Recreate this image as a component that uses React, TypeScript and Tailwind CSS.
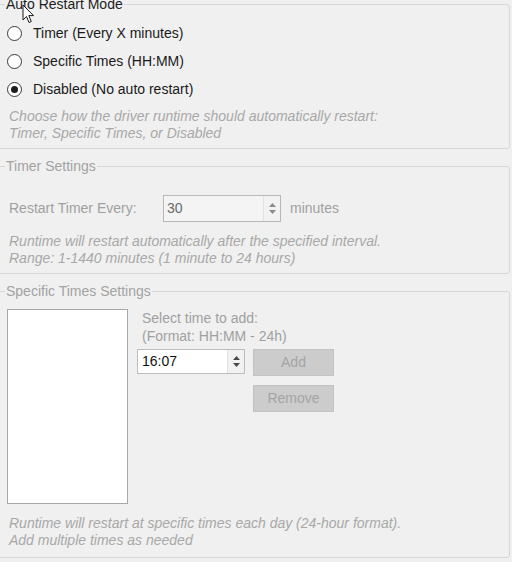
import React from "react";

function Radio({ label, checked }: { label: string; checked?: boolean }) {
  return (
    <div className="flex h-[28px] items-center">
      <div className="flex h-[15px] w-[15px] items-center justify-center rounded-full border border-[#3a3a3a] bg-white">
        {checked && <div className="h-[7px] w-[7px] rounded-full bg-[#1c1c1c]" />}
      </div>
      <span className="ml-[11px] text-[#1a1a1a]">{label}</span>
    </div>
  );
}

function Spinner({ disabled }: { disabled?: boolean }) {
  const c = disabled ? "#8a8a8a" : "#4a4a4a";
  return (
    <div className="flex h-full w-[17px] flex-col items-center justify-center gap-[3px] border-l border-[#e2e2e2] bg-[#f2f2f2]">
      <svg width="7" height="4" viewBox="0 0 7 4">
        <path d="M0 4 L3.5 0 L7 4 Z" fill={c} />
      </svg>
      <svg width="7" height="4" viewBox="0 0 7 4">
        <path d="M0 0 L3.5 4 L7 0 Z" fill={c} />
      </svg>
    </div>
  );
}

export default function App() {
  return (
    <div className="relative h-[562px] w-[512px] overflow-hidden bg-[#f0f0f0] font-['Liberation_Sans',Arial,sans-serif] text-[14px]">
      <div className="-ml-[3px] -mt-[4px] flex w-[513px] flex-col gap-[9px]">
        {/* Auto Restart Mode */}
        <fieldset className="h-[153px] rounded-[3px] border border-[#d6d6d6]">
          <legend className="ml-[7px] px-[1px] leading-[16px] text-[#1e1e1e]">Auto Restart Mode</legend>
          <div className="pl-[9px] pt-[7px]">
            <Radio label="Timer (Every X minutes)" />
            <Radio label="Specific Times (HH:MM)" />
            <Radio label="Disabled (No auto restart)" checked />
          </div>
          <div className="mt-[5px] pl-[11px] italic leading-[17px] text-[#a8a8a8]">
            <div>Choose how the driver runtime should automatically restart:</div>
            <div>Timer, Specific Times, or Disabled</div>
          </div>
        </fieldset>

        {/* Timer Settings */}
        <fieldset className="h-[116px] rounded-[3px] border border-[#d6d6d6]">
          <legend className="ml-[7px] px-[1px] leading-[16px] text-[#a2a2a2]">Timer Settings</legend>
          <div className="mt-[21px] flex h-[27px] items-center">
            <div className="w-[165px] pl-[11px] text-[#a0a0a0]">Restart Timer Every:</div>
            <div className="flex h-[27px] w-[118px] items-stretch border border-[#b8b8b8] bg-[#f4f4f4]">
              <div className="flex flex-1 items-center pl-[3px] text-[#6a6a6a]">30</div>
              <Spinner disabled />
            </div>
            <div className="ml-[9px] text-[#a0a0a0]">minutes</div>
          </div>
          <div className="mt-[11px] pl-[11px] italic leading-[17px] text-[#a8a8a8]">
            <div>Runtime will restart automatically after the specified interval.</div>
            <div>Range: 1-1440 minutes (1 minute to 24 hours)</div>
          </div>
        </fieldset>

        {/* Specific Times Settings */}
        <fieldset className="h-[275px] rounded-[3px] border border-[#d6d6d6]">
          <legend className="ml-[7px] px-[1px] leading-[16px] text-[#a2a2a2]">Specific Times Settings</legend>
          <div className="mt-[10px] flex pl-[9px]">
            <div className="h-[195px] w-[121px] border border-[#a8a8a8] bg-white" />
            <div className="ml-[9px] flex flex-col">
              <div className="pl-[5px] leading-[18px] text-[#a0a0a0]">
                <div>Select time to add:</div>
                <div>(Format: HH:MM - 24h)</div>
              </div>
              <div className="mt-[4px] flex items-start">
                <div className="flex h-[25px] w-[108px] items-stretch border border-[#bcbcbc] bg-white">
                  <div className="flex flex-1 items-center pl-[4px] text-[#111]">16:07</div>
                  <Spinner />
                </div>
                <div className="ml-[8px] flex flex-col gap-[9px]">
                  <div className="flex h-[27px] w-[81px] items-center justify-center border border-[#c2c2c2] bg-[#cccccc] text-[#a4a4a4]">Add</div>
                  <div className="flex h-[27px] w-[81px] items-center justify-center border border-[#c2c2c2] bg-[#cccccc] text-[#a4a4a4]">Remove</div>
                </div>
              </div>
            </div>
          </div>
          <div className="mt-[11px] pl-[11px] italic leading-[17px] text-[#a8a8a8]">
            <div>Runtime will restart at specific times each day (24-hour format).</div>
            <div>Add multiple times as needed</div>
          </div>
        </fieldset>
      </div>

      {/* mouse cursor */}
      <svg className="absolute left-[22px] top-[4px]" width="13" height="20" viewBox="0 0 13 20">
        <path d="M1 1 L1 16 L4.5 12.5 L7 18.5 L9.3 17.5 L6.8 11.6 L11.5 11.6 Z" fill="#ffffff" stroke="#1a1a1a" strokeWidth="1" strokeLinejoin="miter" />
      </svg>
    </div>
  );
}
